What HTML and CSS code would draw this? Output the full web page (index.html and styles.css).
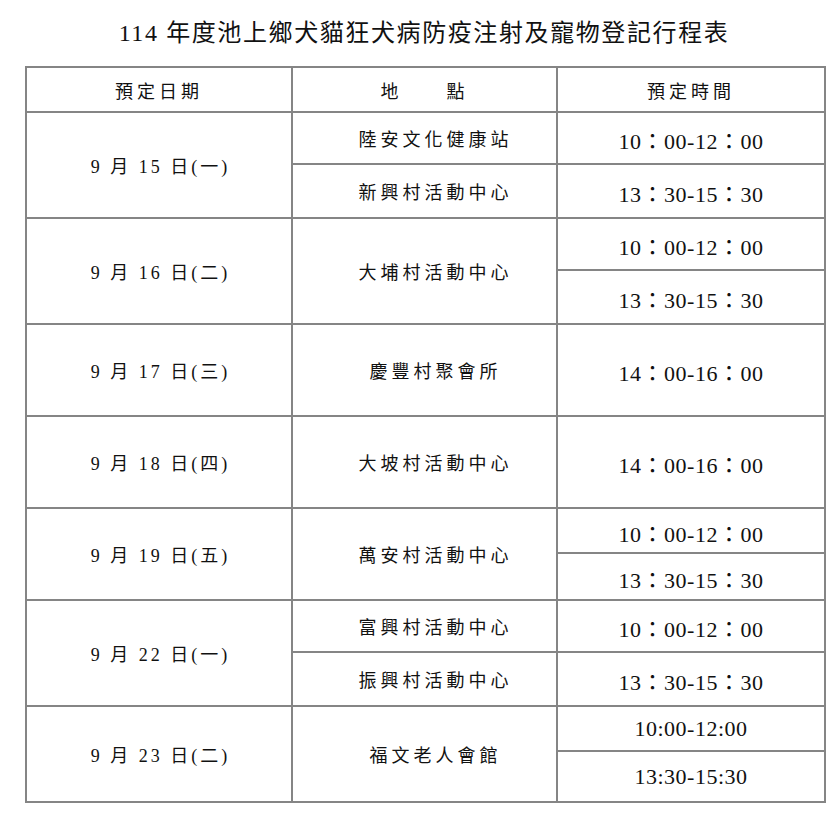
FILE: index.html
```html
<!DOCTYPE html>
<html lang="zh-Hant">
<head>
<meta charset="utf-8">
<link rel="stylesheet" href="styles.css">
</head>
<body>
<div class="page">
  <h1 class="title">114 年度池上鄉犬貓狂犬病防疫注射及寵物登記行程表</h1>
  <table class="sched">
    <colgroup><col class="c1"><col class="c2"><col class="c3"></colgroup>
    <tr class="h-head"><th>預定日期</th><th>地　　點</th><th>預定時間</th></tr>
    <tr class="h52"><td class="d" rowspan="2">9 月 15 日(一)</td><td class="loc">陸安文化健康站</td><td class="t">10：00-12：00</td></tr>
    <tr class="h54"><td class="loc">新興村活動中心</td><td class="t">13：30-15：30</td></tr>
    <tr class="h52"><td class="d" rowspan="2">9 月 16 日(二)</td><td class="loc" rowspan="2">大埔村活動中心</td><td class="t">10：00-12：00</td></tr>
    <tr class="h54"><td class="t">13：30-15：30</td></tr>
    <tr class="h92"><td class="d">9 月 17 日(三)</td><td class="loc">慶豐村聚會所</td><td class="t">14：00-16：00</td></tr>
    <tr class="h92"><td class="d">9 月 18 日(四)</td><td class="loc">大坡村活動中心</td><td class="t">14：00-16：00</td></tr>
    <tr class="h45"><td class="d" rowspan="2">9 月 19 日(五)</td><td class="loc" rowspan="2">萬安村活動中心</td><td class="t">10：00-12：00</td></tr>
    <tr class="h47"><td class="t">13：30-15：30</td></tr>
    <tr class="h52"><td class="d" rowspan="2">9 月 22 日(一)</td><td class="loc">富興村活動中心</td><td class="t">10：00-12：00</td></tr>
    <tr class="h54"><td class="loc">振興村活動中心</td><td class="t">13：30-15：30</td></tr>
    <tr class="h45"><td class="d" rowspan="2">9 月 23 日(二)</td><td class="loc" rowspan="2">福文老人會館</td><td class="t2">10:00-12:00</td></tr>
    <tr class="h51"><td class="t2">13:30-15:30</td></tr>
  </table>
</div>
</body>
</html>
```

FILE: styles.css
```css
html, body {
  margin: 0;
  padding: 0;
  background: #ffffff;
}
.page {
  padding: 17px 0 0 25px;
  font-family: "Liberation Serif", "Noto Sans CJK TC", serif;
  color: #111;
}
.title {
  margin: 0 0 17px 0;
  width: 798px;
  text-align: center;
  font-size: 24px;
  font-weight: normal;
  line-height: 32px;
  letter-spacing: 1.6px;
}
.sched {
  border-collapse: collapse;
  table-layout: fixed;
  width: 799px;
}
.c1 { width: 266px; }
.c2 { width: 265px; }
.c3 { width: 268px; }
.sched th, .sched td {
  border: 2px solid #858585;
  padding: 0;
  text-align: center;
  vertical-align: middle;
  font-weight: normal;
  font-size: 18px;
  letter-spacing: 4px;
}
.sched td.d {
  letter-spacing: 3px;
  padding-left: 3px;
}
.sched td.loc {
  padding-left: 22px;
}
.sched td.t {
  font-size: 22px;
  letter-spacing: 0.5px;
  padding-top: 2px;
}
.sched td.t2 {
  font-size: 22px;
  letter-spacing: 0.5px;
}
.h-head { height: 45px; }
.h53 { height: 53px; }
.h54 { height: 54px; }
.h52 { height: 52px; }
.h92 { height: 92px; }
.h45 { height: 45px; }
.h47 { height: 47px; }
.h51 { height: 51px; }
```
